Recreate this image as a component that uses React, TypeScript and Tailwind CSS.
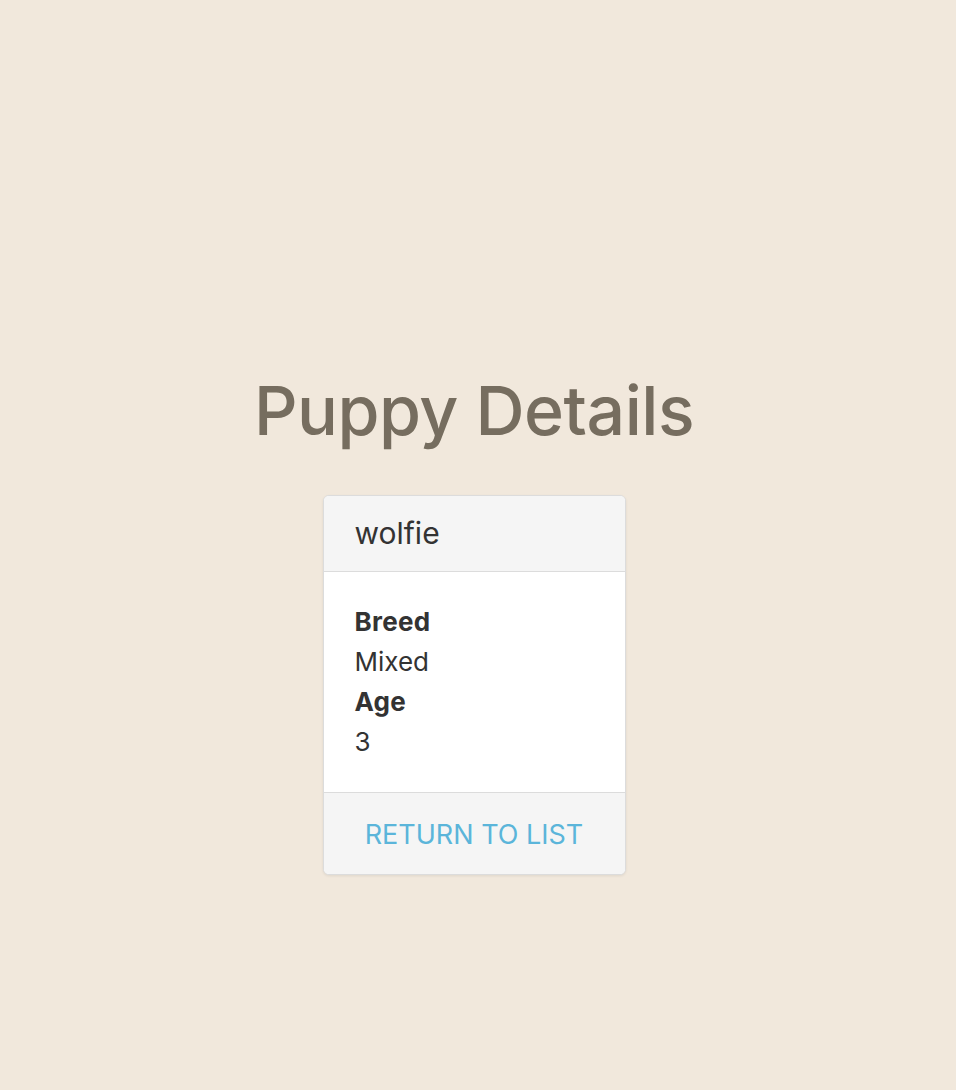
import React from "react";

export default function App() {
  return (
    <div
      className="min-h-[1090px] w-full bg-[#f1e8dc] flex flex-col items-center pt-[360px] pr-[8px]"
      style={{ fontFamily: "Inter, 'Noto Sans', sans-serif" }}
    >
      <h1 className="text-[68px] leading-[100px] text-[#766d5f] font-[450] tracking-[-0.5px]">Puppy Details</h1>
      <div className="mt-[35px] w-[303px] rounded-[6px] border border-[#dcdcdc] bg-white shadow-[0_1px_3px_rgba(0,0,0,0.08)] overflow-hidden">
        <div className="h-[76px] bg-[#f5f5f5] border-b border-[#dcdcdc] flex items-center px-[31px]">
          <span className="text-[30px] text-[#333333]">wolfie</span>
        </div>
        <div className="px-[31px] py-[30px] text-[26px] leading-[40px] text-[#333333]">
          <div className="font-bold tracking-[0.3px]">Breed</div>
          <div>Mixed</div>
          <div className="font-bold tracking-[0.3px]">Age</div>
          <div>3</div>
        </div>
        <div className="h-[82px] bg-[#f5f5f5] border-t border-[#dcdcdc] flex items-center justify-center pt-[3px]">
          <span className="text-[27px] text-[#5bb5da]">RETURN TO LIST</span>
        </div>
      </div>
    </div>
  );
}
